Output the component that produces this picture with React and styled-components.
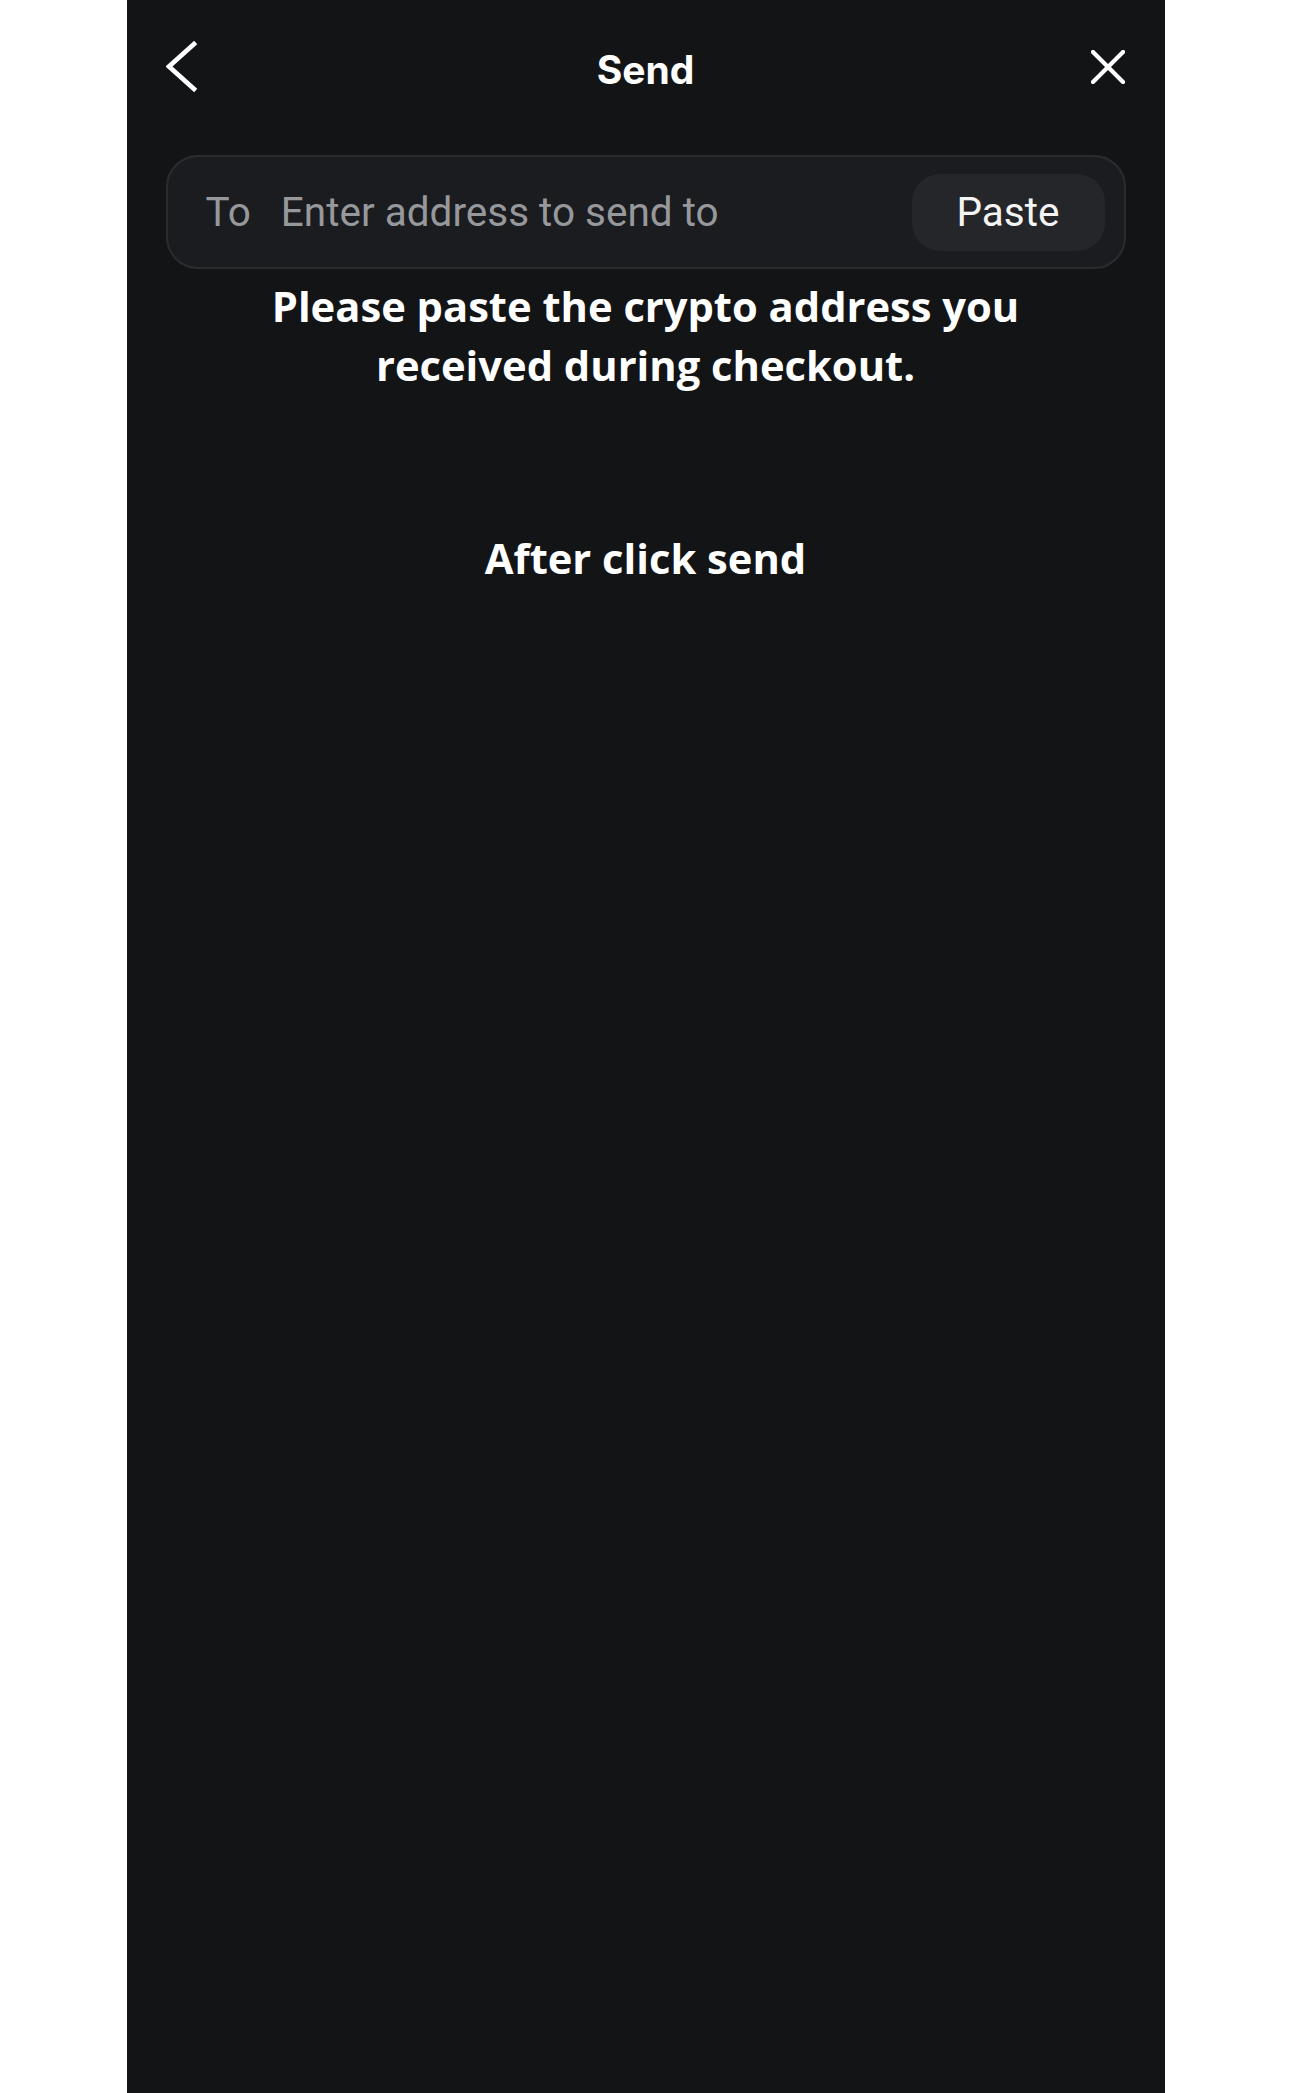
import styled, { createGlobalStyle } from 'styled-components';

const GlobalStyle = createGlobalStyle`
  html, body {
    margin: 0;
    padding: 0;
    background: #ffffff;
  }
  * {
    box-sizing: border-box;
  }
`

const Page = styled.div`
  display: flex;
  justify-content: center;
  min-height: 2093px;
  padding-left: 1px;
`

const Panel = styled.div`
  width: 1038px;
  min-height: 2093px;
  background: #131416;
  display: flex;
  flex-direction: column;
  padding: 0 39px;
`

const Header = styled.div`
  height: 134px;
  display: flex;
  align-items: center;
  justify-content: space-between;
`

const IconButton = styled.button`
  width: 44px;
  height: 60px;
  border: none;
  background: none;
  padding: 0;
  display: flex;
  align-items: center;
  justify-content: ${props => props.align};
  cursor: pointer;
`

const Title = styled.h1`
  margin: 4px 0 0;
  font-family: Inter, Roboto, "Liberation Sans", sans-serif;
  font-weight: 700;
  font-size: 39px;
  color: #ffffff;
`

const AddressBox = styled.div`
  margin-top: 21px;
  height: 114px;
  border: 2px solid #2b2c30;
  border-radius: 32px;
  background: #1b1c1f;
  display: flex;
  align-items: center;
  padding: 0 19px 0 38px;
`

const Label = styled.span`
  font-family: Roboto, "Liberation Sans", sans-serif;
  font-size: 40.5px;
  color: #97989c;
  margin-right: 30px;
`

const AddressInput = styled.input`
  flex: 1;
  min-width: 0;
  border: none;
  outline: none;
  background: transparent;
  font-family: Roboto, "Liberation Sans", sans-serif;
  font-size: 40.5px;
  color: #ffffff;
  padding: 0;

  &::placeholder {
    color: #97989c;
  }
`

const PasteButton = styled.button`
  width: 193px;
  height: 77px;
  border: none;
  border-radius: 28px;
  background: #25262a;
  color: #f4f4f4;
  font-family: Roboto, "Liberation Sans", sans-serif;
  font-size: 40.5px;
  cursor: pointer;
`

const Message = styled.p`
  margin: ${props => props.top}px 0 0;
  font-family: "Open Sans", Lato, sans-serif;
  font-weight: 700;
  font-size: 41.7px;
  line-height: 59px;
  color: #ffffff;
  text-align: center;
`

const BackIcon = () => (
  <svg width="32" height="52" viewBox="0 0 32 52" fill="none">
    <polyline points="28,3 3,25.5 28,48" stroke="#ffffff" strokeWidth="4.6" strokeLinecap="square" />
  </svg>
)

const CloseIcon = () => (
  <svg width="34" height="34" viewBox="0 0 34 34" fill="none">
    <path d="M2 2L32 32M32 2L2 32" stroke="#ffffff" strokeWidth="4.2" strokeLinecap="square" />
  </svg>
)

const App = () => {
  return (
    <Page>
      <GlobalStyle />
      <Panel>
        <Header>
          <IconButton align="flex-start">
            <BackIcon />
          </IconButton>
          <Title>Send</Title>
          <IconButton align="flex-end">
            <CloseIcon />
          </IconButton>
        </Header>
        <AddressBox>
          <Label>To</Label>
          <AddressInput placeholder="Enter address to send to" />
          <PasteButton>Paste</PasteButton>
        </AddressBox>
        <Message top={7}>
          Please paste the crypto address you<br />
          received during checkout.
        </Message>
        <Message top={134}>After click send</Message>
      </Panel>
    </Page>
  )
}

export default App
